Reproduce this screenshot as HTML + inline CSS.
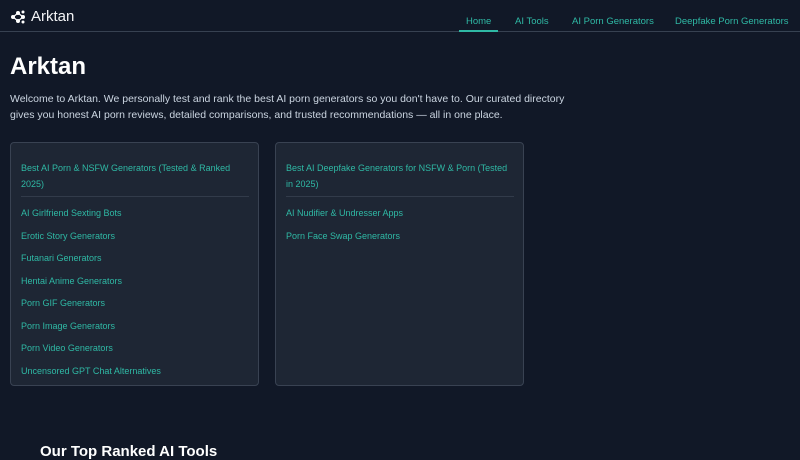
<!DOCTYPE html>
<html><head><meta charset="utf-8"><style>
*{margin:0;padding:0;box-sizing:border-box}
body{width:800px;height:450px;overflow:hidden;background:#111827;font-family:"Liberation Sans",sans-serif;color:#e5e7eb;position:relative}
.hdr{position:absolute;left:0;top:0;width:800px;height:32px;border-bottom:1px solid #374151}
.logo{position:absolute;left:10px;top:9px;font-size:15px;color:#f3f4f6}
.logo span{position:absolute;left:21px;top:-1px}
.nav a{position:absolute;top:16px;font-size:9.5px;color:#2fb9a5;text-decoration:none;white-space:nowrap}
.ul{position:absolute;left:459px;top:30px;width:39px;height:2px;background:#2fb9a5}
h1{position:absolute;left:10px;top:53px;font-size:24px;font-weight:bold;color:#fff}
p{position:absolute;left:10px;top:91px;width:580px;font-size:10.5px;line-height:16px;color:#cbd5e1}
.card{position:absolute;top:142px;width:249px;height:244px;background:#1e2634;border:1px solid #394252;border-radius:4px}
.card div{position:absolute;left:10px;font-size:9px;color:#2fb9a5;white-space:nowrap}
.hd{line-height:16px}
.dv{position:absolute;left:10px;top:53px;width:228px;height:1px;background:#323b4a}
h2{position:absolute;left:40px;top:443px;font-size:15px;font-weight:bold;color:#fff}
</style></head><body>
<div class="hdr">
<div class="logo"><svg width="16" height="14" viewBox="0 0 16 14" style="position:absolute;left:0;top:1px"><g stroke="#fff" stroke-width="1.2"><line x1="3" y1="7" x2="8" y2="3"/><line x1="3" y1="7" x2="8" y2="11"/><line x1="8" y1="3" x2="13" y2="7"/><line x1="8" y1="11" x2="13" y2="7"/></g><g fill="#fff"><circle cx="3" cy="7" r="2"/><circle cx="8" cy="3" r="2"/><circle cx="8" cy="11" r="2"/><circle cx="13" cy="7" r="2"/><circle cx="13" cy="2" r="1.5"/><circle cx="13" cy="12" r="1.5"/></g></svg><span>Arktan</span></div>
<div class="nav"><a style="left:466px">Home</a><a style="left:515px">AI Tools</a><a style="left:572px">AI Porn Generators</a><a style="left:675px">Deepfake Porn Generators</a></div>
<div class="ul"></div>
</div>
<h1>Arktan</h1>
<p>Welcome to Arktan. We personally test and rank the best AI porn generators so you don't have to. Our curated directory gives you honest AI porn reviews, detailed comparisons, and trusted recommendations — all in one place.</p>
<div class="card" style="left:10px">
<div class="hd" style="top:17px">Best AI Porn &amp; NSFW Generators (Tested &amp; Ranked<br>2025)</div>
<span class="dv"></span>
<div style="top:65px">AI Girlfriend Sexting Bots</div>
<div style="top:88px">Erotic Story Generators</div>
<div style="top:110px">Futanari Generators</div>
<div style="top:133px">Hentai Anime Generators</div>
<div style="top:155px">Porn GIF Generators</div>
<div style="top:178px">Porn Image Generators</div>
<div style="top:200px">Porn Video Generators</div>
<div style="top:223px">Uncensored GPT Chat Alternatives</div>
</div>
<div class="card" style="left:275px">
<div class="hd" style="top:17px">Best AI Deepfake Generators for NSFW &amp; Porn (Tested<br>in 2025)</div>
<span class="dv"></span>
<div style="top:65px">AI Nudifier &amp; Undresser Apps</div>
<div style="top:88px">Porn Face Swap Generators</div>
</div>
<h2>Our Top Ranked AI Tools</h2>
</body></html>
